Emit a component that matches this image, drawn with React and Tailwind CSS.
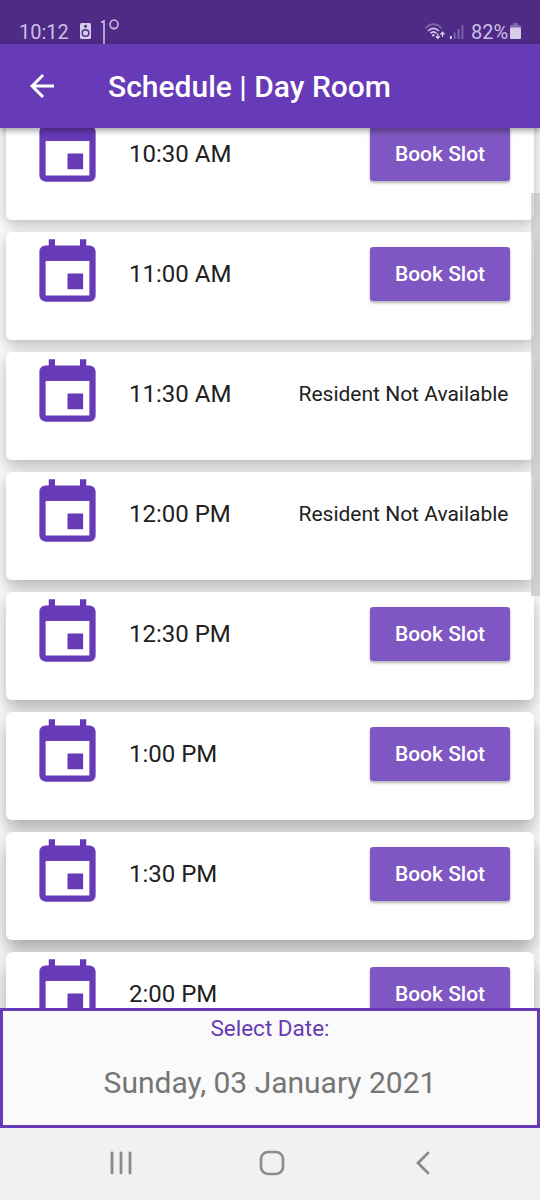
import React from 'react';
import { MdEvent, MdArrowBack } from 'react-icons/md';

// shadows get deeper towards the bottom of the screen
const slots = [
  { time: '10:30 AM', available: true, shadow: 'shadow-[0_4px_14px_rgba(0,0,0,0.26)]' },
  { time: '11:00 AM', available: true, shadow: 'shadow-[0_5px_14px_rgba(0,0,0,0.26)]' },
  { time: '11:30 AM', available: false, shadow: 'shadow-[0_6px_15px_rgba(0,0,0,0.27)]' },
  { time: '12:00 PM', available: false, shadow: 'shadow-[0_7px_15px_rgba(0,0,0,0.28)]' },
  { time: '12:30 PM', available: true, shadow: 'shadow-[0_8px_16px_rgba(0,0,0,0.29)]' },
  { time: '1:00 PM', available: true, shadow: 'shadow-[0_9px_17px_rgba(0,0,0,0.31)]' },
  { time: '1:30 PM', available: true, shadow: 'shadow-[0_10px_18px_rgba(0,0,0,0.33)]' },
  { time: '2:00 PM', available: true, shadow: 'shadow-[0_11px_19px_rgba(0,0,0,0.34)]' },
];

const StatusBar = () => {
  return (
    <div className="h-[44px] shrink-0 bg-[#4d2b86] flex items-end justify-between pl-[19px] pr-[19px] text-[#cdbfe4]">
      <div className="flex items-end h-full">
        <span className="text-[20px] leading-[24px] w-[61px] whitespace-nowrap">10:12</span>
        <svg className="w-[11px] h-[16px] mb-[5px]" viewBox="0 0 11 16">
          <rect width="11" height="16" rx="1.5" fill="#d6cbe8" />
          <circle cx="5.5" cy="3.2" r="1.5" fill="#4d2b86" />
          <circle cx="5.5" cy="10" r="3.3" fill="none" stroke="#4d2b86" strokeWidth="1.5" />
        </svg>
        <svg className="w-[20px] h-[26px] ml-[10px]" viewBox="0 0 20 26" fill="none" stroke="#cdbfe4" strokeWidth="1.6">
          <path d="M0 4.5l3-1.5v23" />
          <ellipse cx="13" cy="6.3" rx="4" ry="4.3" />
        </svg>
      </div>
      <div className="flex items-end h-full">
        <svg className="w-[20px] h-[17px] mb-[4px]" viewBox="0 0 20 17" fill="none" stroke="#d6cbe8" strokeWidth="1.6">
          <path d="M0.5 5.2Q8.5-3 16.5 5.2" opacity="0.4" />
          <path d="M3 8Q8.5 2.6 14 8" />
          <path d="M5.5 10.4Q8.5 7.4 11.5 10.4" />
          <circle cx="8.3" cy="12.3" r="1.2" fill="#d6cbe8" stroke="none" />
          <path d="M12.8 10.5v4.5M10.8 13.2l2 2.2 2-2.2M17.5 14v-4.5M15.5 11.5l2-2.2 2 2.2" strokeWidth="1.3" />
        </svg>
        <svg className="w-[14px] h-[15px] ml-[5px] mb-[5px]" viewBox="0 0 14 15" fill="#8268ac">
          <rect x="0" y="12" width="1.7" height="3" fill="#e6def2" />
          <rect x="3.8" y="8.5" width="1.7" height="6.5" />
          <rect x="7.7" y="5" width="1.7" height="10" />
          <rect x="11.6" y="1" width="1.7" height="14" />
        </svg>
        <span className="text-[20px] leading-[24px] ml-[7px] w-[39px] whitespace-nowrap">82%</span>
        <svg className="w-[11px] h-[16px] mb-[5px]" viewBox="0 0 11 16">
          <rect x="3" width="5" height="3" rx="1" fill="#8268ac" />
          <rect y="2" width="11" height="3" rx="1" fill="#8268ac" />
          <rect y="4.5" width="11" height="11.5" rx="1" fill="#d6cbe8" />
        </svg>
      </div>
    </div>
  );
};

const SlotCard = ({ slot }) => {
  return (
    <div className={`h-[108px] shrink-0 rounded-[6px] bg-white flex items-start pl-6 pr-6 ${slot.shadow}`}>
      <MdEvent className="w-[75px] h-[75px] mt-[4.4px] shrink-0 text-[#673ab7]" />
      <div className="flex flex-1 items-center justify-between h-[84px] pl-6">
        <span className="text-[24px] text-[#212121] whitespace-nowrap">{slot.time}</span>
        {slot.available ? (
          <button
            type="button"
            className="w-[140px] h-[54px] pt-[2px] rounded-[3px] bg-[#7e57c2] text-white text-[21px] font-medium shadow-[0_2px_3px_rgba(0,0,0,0.3)]"
          >
            Book Slot
          </button>
        ) : (
          <span className="text-[21px] text-[#212121] whitespace-nowrap mr-[1.5px] pt-[2px]">Resident Not Available</span>
        )}
      </div>
    </div>
  );
};

const App = () => {
  return (
    <div className="w-[540px] h-[1200px] flex flex-col overflow-hidden bg-[#fafafa] font-[Roboto,sans-serif]">
      <StatusBar />
      <header className="relative z-10 h-[84px] shrink-0 bg-[#673ab7] text-white flex items-center pl-6 shadow-[0_3px_6px_rgba(0,0,0,0.35)]">
        <MdArrowBack className="w-9 h-9" />
        <h1 className="text-[30px] font-medium ml-12 whitespace-nowrap">Schedule | Day Room</h1>
      </header>

      <main className="relative h-[880px] shrink-0 overflow-hidden">
        <div className="flex flex-col gap-3 px-[6px] -mt-4">
          {slots.map((slot) => (
            <SlotCard key={slot.time} slot={slot} />
          ))}
        </div>
        {/* scrollbar thumb */}
        <div className="absolute right-0 top-[65px] w-[9px] h-[403px] bg-[#bcbcbc]/60" />
      </main>

      <section className="h-[120px] shrink-0 border-[3px] border-[#673ab7] bg-[#fafafa] flex flex-col items-center">
        <p className="text-[22.5px] leading-[24px] mt-[5px] text-[#673ab7]">Select Date:</p>
        <p className="text-[30px] leading-[36px] mt-[25px] text-[#757575] whitespace-nowrap">Sunday, 03 January 2021</p>
      </section>

      <nav className="h-[72px] shrink-0 bg-[#f1f1f1] flex items-center pl-[109px] pr-[108px] pb-[3px] justify-between">
        <svg className="w-[24px] h-[24px]" viewBox="0 0 24 24" stroke="#8a8a8a" strokeWidth="2.8" strokeLinecap="round">
          <path d="M3 2v20M12 2v20M21 2v20" />
        </svg>
        <svg className="w-[26px] h-[26px] -ml-[3px]" viewBox="0 0 26 26" fill="none" stroke="#8a8a8a" strokeWidth="2.6">
          <rect x="2" y="2" width="22" height="22" rx="7" />
        </svg>
        <svg className="w-[18px] h-[24px]" viewBox="0 0 18 24" fill="none" stroke="#8a8a8a" strokeWidth="2.8" strokeLinecap="round">
          <path d="M14 2L4 12l10 10" />
        </svg>
      </nav>
    </div>
  );
};

export default App;
